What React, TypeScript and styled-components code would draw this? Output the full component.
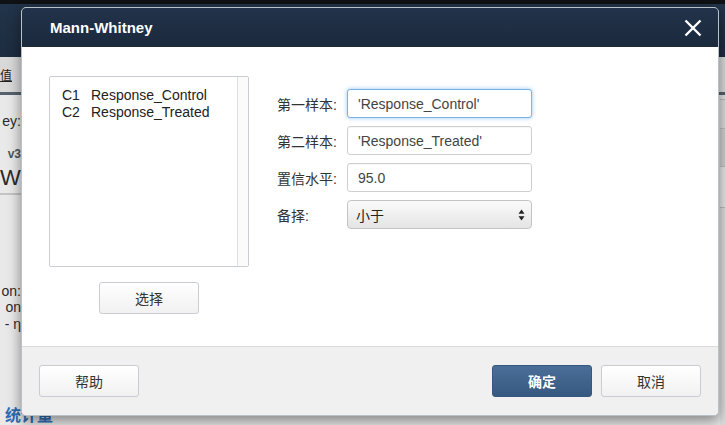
import React from 'react';
import styled, { createGlobalStyle } from 'styled-components';

const GlobalStyle = createGlobalStyle`
  html, body {
    margin: 0;
    padding: 0;
    width: 725px;
    height: 425px;
    overflow: hidden;
    font-family: "Liberation Sans", "Noto Sans CJK SC", Arial, sans-serif;
  }
`;

const FONT = `"Liberation Sans", "Noto Sans CJK SC", Arial, sans-serif`;

/* ---------- backdrop page ---------- */

const Screen = styled.div`
  position: relative;
  width: 725px;
  height: 425px;
  overflow: hidden;
  display: flex;
  flex-direction: column;
  background: #e4e4e4;
`;

const TopStrip = styled.div`
  height: 4px;
  background: #0f1114;
`;

const NavBar = styled.div`
  height: 56px;
  background: linear-gradient(#22344a, #1d2c3f);
`;

const Toolbar = styled.div`
  height: 37px;
  background: #d9d9d9;
  border-bottom: 3px solid #55616d;
  display: flex;
  align-items: center;
`;

const ToolText = styled.span`
  font-size: 12px;
  color: #222;
  text-decoration: underline;
`;

const Content = styled.div`
  flex: 1;
  display: flex;
  justify-content: space-between;
`;

const Gutter = styled.div`
  width: 21px;
  display: flex;
  flex-direction: column;
  align-items: flex-end;
  white-space: nowrap;
  background: #e9e9e9;
`;

const GutterLine = styled.div<{ $size: number; $top: number; $color?: string }>`
  font-size: ${p => p.$size}px;
  line-height: ${p => p.$size + 3}px;
  margin-top: ${p => p.$top}px;
  color: ${p => p.$color || '#2a2a2a'};
  font-weight: ${p => (p.$color ? 700 : 400)};
`;

const GutterHeading = styled.div`
  align-self: stretch;
  font-size: 22px;
  line-height: 25px;
  margin-top: 3px;
  padding-bottom: 3px;
  border-bottom: 2px solid #c4c4c4;
  color: #2a2a2a;
`;

const GutterLink = styled.div`
  align-self: stretch;
  padding-left: 5px;
  font-size: 16px;
  line-height: 19px;
  margin-top: 73px;
  font-weight: 700;
  color: #2f6db5;
`;

const RightGutter = styled.div`
  width: 5px;
  display: flex;
  flex-direction: column;
  background: #dcdcdc;
`;

const RightBlock = styled.div<{ $h: number; $bg: string }>`
  height: ${p => p.$h}px;
  background: ${p => p.$bg};
  border-bottom: 1px solid #bdbdbd;
`;

/* ---------- modal ---------- */

const Modal = styled.div`
  position: absolute;
  left: 21px;
  top: 7px;
  width: 698px;
  height: 409px;
  box-sizing: border-box;
  border: 1px solid #b9c0c8;
  border-radius: 5px;
  overflow: hidden;
  display: flex;
  flex-direction: column;
  background: #fff;
  box-shadow: 0 4px 14px rgba(0, 0, 0, 0.45);
  font-family: ${FONT};
`;

const Header = styled.div`
  height: 39px;
  flex-shrink: 0;
  background: linear-gradient(#22324a, #1b2a3d);
  display: flex;
  align-items: center;
  justify-content: space-between;
  padding: 0 14px 0 28px;
`;

const Title = styled.h3`
  margin: 0;
  font-size: 15px;
  font-weight: 700;
  color: #fff;
`;

const CloseButton = styled.button`
  width: 22px;
  height: 22px;
  padding: 0;
  border: none;
  background: none;
  display: flex;
  align-items: center;
  justify-content: center;
`;

const Body = styled.div`
  flex: 1;
  display: flex;
  padding: 29px 0 0 27px;
  gap: 28px;
`;

const LeftColumn = styled.div`
  width: 200px;
  display: flex;
  flex-direction: column;
  align-items: center;
  gap: 15px;
`;

const ListBox = styled.div`
  width: 200px;
  height: 191px;
  box-sizing: border-box;
  border: 1px solid #c9cdd2;
  border-radius: 2px;
  display: flex;
`;

const ListItems = styled.div`
  flex: 1;
  padding: 10px 0 0 12px;
`;

const ScrollTrack = styled.div`
  width: 10px;
  border-left: 1px solid #dde0e3;
  background: #fbfbfb;
`;

const ListItem = styled.div`
  display: grid;
  grid-template-columns: 29px auto;
  font-size: 14px;
  line-height: 17px;
  color: #222;
`;

const Form = styled.div`
  display: flex;
  flex-direction: column;
  gap: 8px;
  padding-top: 13px;
`;

const Row = styled.div`
  display: flex;
  align-items: center;
`;

const Label = styled.label`
  width: 70px;
  font-size: 14px;
  color: #333;
`;

const Input = styled.div<{ $focused?: boolean }>`
  width: 185px;
  height: 29px;
  box-sizing: border-box;
  border: 1px solid ${p => (p.$focused ? '#78b2e8' : '#cfcfcf')};
  border-radius: 3px;
  box-shadow: ${p =>
    p.$focused ? '0 0 4px rgba(102, 175, 233, 0.7)' : 'inset 0 1px 1px rgba(0,0,0,0.04)'};
  padding: 0 10px;
  display: flex;
  align-items: center;
  font-size: 14px;
  color: #444;
  background: #fff;
`;

const Select = styled.div`
  width: 185px;
  height: 29px;
  box-sizing: border-box;
  border: 1px solid #c3c3c3;
  border-radius: 4px;
  background: linear-gradient(#fbfbfb, #e4e4e4);
  padding: 0 6px 0 8px;
  display: flex;
  align-items: center;
  justify-content: space-between;
  font-size: 14px;
  color: #222;
`;

const Footer = styled.div`
  height: 69px;
  flex-shrink: 0;
  box-sizing: border-box;
  border-top: 1px solid #dadada;
  background: #f0f0f0;
  display: flex;
  align-items: center;
  padding: 0 17px;
  gap: 9px;
`;

const Spacer = styled.div`
  flex: 1;
`;

const Button = styled.button<{ $primary?: boolean }>`
  width: 100px;
  height: 32px;
  border-radius: 3px;
  font-family: ${FONT};
  font-size: 14px;
  cursor: pointer;
  border: 1px solid ${p => (p.$primary ? '#365780' : '#c9ccd0')};
  color: ${p => (p.$primary ? '#fff' : '#333')};
  font-weight: ${p => (p.$primary ? 700 : 400)};
  background: ${p =>
    p.$primary ? 'linear-gradient(#4a6e98, #375981)' : 'linear-gradient(#ffffff, #f1f1f1)'};
`;

const CloseIcon = () => (
  <svg width="18" height="18" viewBox="0 0 18 18">
    <path d="M1.5 1.5 L16.5 16.5 M16.5 1.5 L1.5 16.5" stroke="#fff" strokeWidth="2.4" />
  </svg>
);

const SortArrows = () => (
  <svg width="7" height="12" viewBox="0 0 7 12">
    <path d="M3.5 0.5 L6.5 4.8 L0.5 4.8 Z M3.5 11.5 L6.5 7.2 L0.5 7.2 Z" fill="#222" />
  </svg>
);

const columns = [
  { id: 'C1', name: 'Response_Control' },
  { id: 'C2', name: 'Response_Treated' },
];

export default function App() {
  return (
    <>
      <GlobalStyle />
      <Screen>
        <TopStrip />
        <NavBar />
        <Toolbar>
          <ToolText>值</ToolText>
        </Toolbar>
        <Content>
          <Gutter>
            <GutterLine $size={14} $top={18}>ey:</GutterLine>
            <GutterLine $size={12} $top={17} $color="#555">v3</GutterLine>
            <GutterHeading>Wh</GutterHeading>
            <GutterLine $size={14} $top={88}>on:</GutterLine>
            <GutterLine $size={14} $top={-1}>on</GutterLine>
            <GutterLine $size={14} $top={0}>- η</GutterLine>
            <GutterLink>统计量</GutterLink>
          </Gutter>
          <RightGutter>
            <RightBlock $h={4} $bg="#e2e2e2" />
            <RightBlock $h={28} $bg="#dadada" />
            <RightBlock $h={37} $bg="#cfcfcf" />
            <RightBlock $h={40} $bg="#e6e6e6" />
          </RightGutter>
        </Content>

        <Modal>
          <Header>
            <Title>Mann-Whitney</Title>
            <CloseButton>
              <CloseIcon />
            </CloseButton>
          </Header>
          <Body>
            <LeftColumn>
              <ListBox>
                <ListItems>
                  {columns.map(c => (
                    <ListItem key={c.id}>
                      <span>{c.id}</span>
                      <span>{c.name}</span>
                    </ListItem>
                  ))}
                </ListItems>
                <ScrollTrack />
              </ListBox>
              <Button>选择</Button>
            </LeftColumn>
            <Form>
              <Row>
                <Label>第一样本:</Label>
                <Input $focused>'Response_Control'</Input>
              </Row>
              <Row>
                <Label>第二样本:</Label>
                <Input>'Response_Treated'</Input>
              </Row>
              <Row>
                <Label>置信水平:</Label>
                <Input>95.0</Input>
              </Row>
              <Row>
                <Label>备择:</Label>
                <Select>
                  <span>小于</span>
                  <SortArrows />
                </Select>
              </Row>
            </Form>
          </Body>
          <Footer>
            <Button>帮助</Button>
            <Spacer />
            <Button $primary>确定</Button>
            <Button>取消</Button>
          </Footer>
        </Modal>
      </Screen>
    </>
  );
}
